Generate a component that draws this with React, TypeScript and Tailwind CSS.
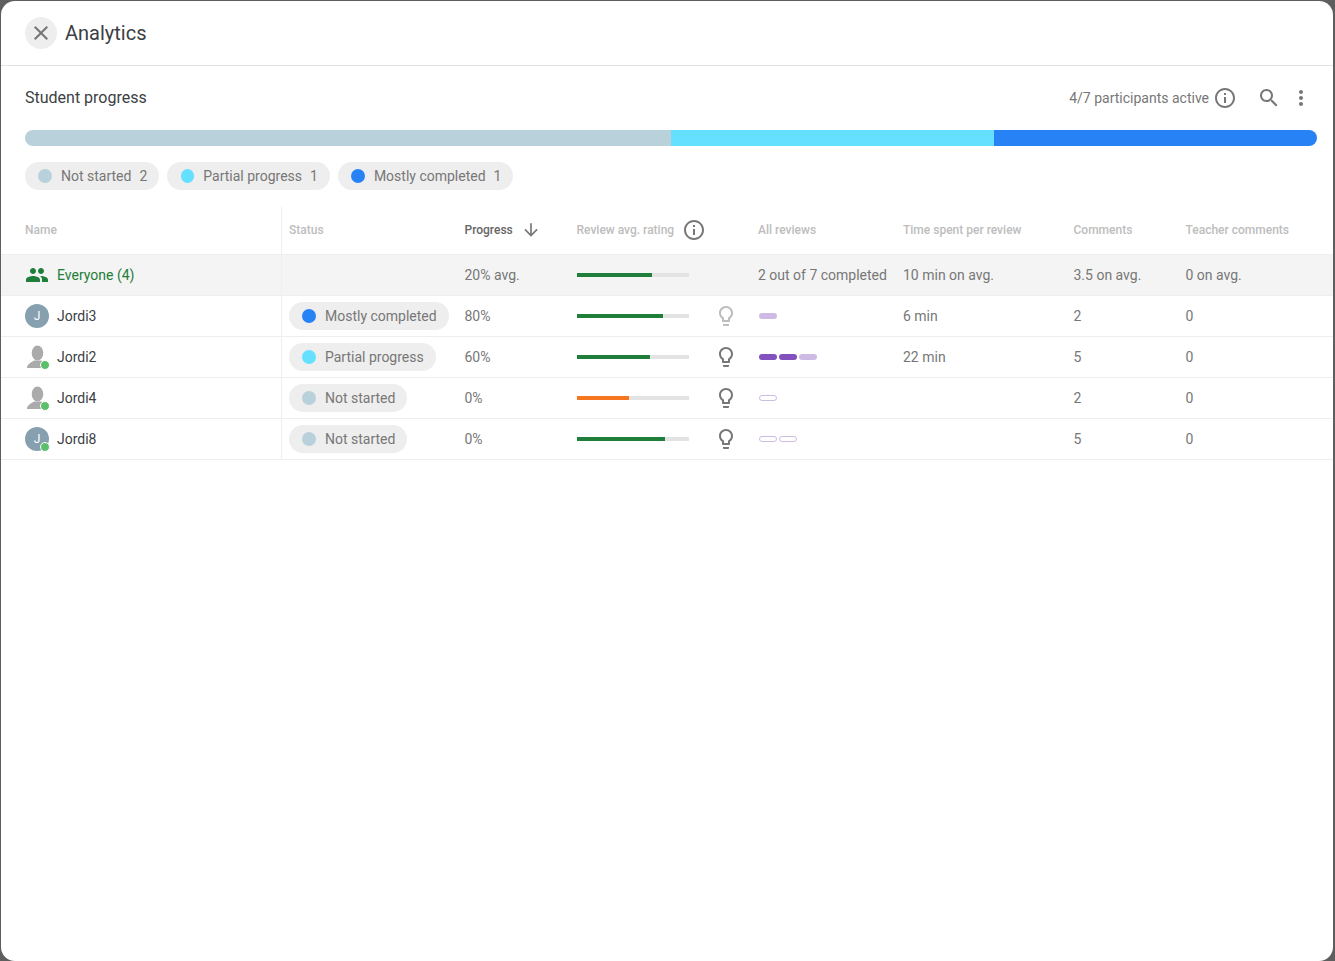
import React from 'react';

const STATUS: Record<string, string> = {
  'Not started': 'bg-[#b8d1da]',
  'Partial progress': 'bg-[#65e0ff]',
  'Mostly completed': 'bg-[#2783f5]',
};

interface Student {
  name: string; avatar: 'letter' | 'photo'; online: boolean; status: string; progress: string;
  rating: number; ratingColor: string; bulbDim: boolean; reviews: string[]; time: string; comments: string;
}

const STUDENTS: Student[] = [
  { name: 'Jordi3', avatar: 'letter', online: false, status: 'Mostly completed', progress: '80%', rating: 77, ratingColor: 'bg-[#1e7e3a]', bulbDim: true, reviews: ['light'], time: '6 min', comments: '2' },
  { name: 'Jordi2', avatar: 'photo', online: true, status: 'Partial progress', progress: '60%', rating: 65, ratingColor: 'bg-[#1e7e3a]', bulbDim: false, reviews: ['dark', 'dark', 'light'], time: '22 min', comments: '5' },
  { name: 'Jordi4', avatar: 'photo', online: true, status: 'Not started', progress: '0%', rating: 46, ratingColor: 'bg-[#f5761f]', bulbDim: false, reviews: ['empty'], time: '', comments: '2' },
  { name: 'Jordi8', avatar: 'letter', online: true, status: 'Not started', progress: '0%', rating: 79, ratingColor: 'bg-[#1e7e3a]', bulbDim: false, reviews: ['empty', 'empty'], time: '', comments: '5' },
];

// material icons, drawn inline so the strokes match
const Icon = ({ d, className }: { d: string; className: string }) => (
  <svg viewBox="0 0 24 24" fill="currentColor" className={className}><path d={d} /></svg>
);
const CLOSE = 'M19 6.41L17.59 5 12 10.59 6.41 5 5 6.41 10.59 12 5 17.59 6.41 19 12 13.41 17.59 19 19 17.59 13.41 12z';
const SEARCH = 'M15.5 14h-.79l-.28-.27C15.41 12.59 16 11.11 16 9.5 16 5.91 13.09 3 9.5 3S3 5.91 3 9.5 5.91 16 9.5 16c1.61 0 3.09-.59 4.23-1.57l.27.28v.79l5 4.99L20.49 19l-4.99-5zm-6 0C7.01 14 5 11.99 5 9.5S7.01 5 9.5 5 14 7.01 14 9.5 11.99 14 9.5 14z';
const MORE = 'M12 8c1.1 0 2-.9 2-2s-.9-2-2-2-2 .9-2 2 .9 2 2 2zm0 2c-1.1 0-2 .9-2 2s.9 2 2 2 2-.9 2-2-.9-2-2-2zm0 6c-1.1 0-2 .9-2 2s.9 2 2 2 2-.9 2-2-.9-2-2-2z';
const INFO = 'M11 7h2v2h-2zm0 4h2v6h-2zm1-9C6.48 2 2 6.48 2 12s4.48 10 10 10 10-4.48 10-10S17.52 2 12 2zm0 18c-4.41 0-8-3.59-8-8s3.59-8 8-8 8 3.59 8 8-3.59 8-8 8z';
const BULB = 'M9 21c0 .55.45 1 1 1h4c.55 0 1-.45 1-1v-1H9v1zm3-19C8.14 2 5 5.14 5 9c0 2.38 1.19 4.47 3 5.74V17c0 .55.45 1 1 1h6c.55 0 1-.45 1-1v-2.26c1.81-1.27 3-3.36 3-5.74 0-3.86-3.14-7-7-7zm2.85 11.1l-.85.6V16h-4v-2.3l-.85-.6C7.8 12.16 7 10.63 7 9c0-2.76 2.24-5 5-5s5 2.24 5 5c0 1.63-.8 3.16-2.15 4.1z';
const ARROW = 'M20 12l-1.41-1.41L13 16.17V4h-2v12.17l-5.58-5.59L4 12l8 8 8-8z';
const PEOPLE = 'M16 11c1.66 0 2.99-1.34 2.99-3S17.66 5 16 5s-3 1.34-3 3 1.34 3 3 3zm-8 0c1.66 0 2.99-1.34 2.99-3S9.66 5 8 5 5 6.34 5 8s1.34 3 3 3zm0 2c-2.33 0-7 1.17-7 3.5V19h14v-2.5c0-2.33-4.67-3.500-7-3.500zm8 0c-.29 0-.62.02-.97.05 1.16.84 1.970 1.97 1.970 3.45V19h6v-2.5c0-2.33-4.67-3.5-7-3.5z';

const Chip = ({ label, count }: { label: string; count?: number }) => (
  <div className="h-7 flex items-center rounded-full bg-[#eeeeee] pl-[13.33px] pr-3 text-[14px] text-[#777777]">
    <span className={`w-[13.33px] h-[13.33px] rounded-full ${STATUS[label]}`} />
    <span className="ml-[9.33px]">{label}</span>
    {count !== undefined && <span className="ml-2">{count}</span>}
  </div>
);

const RatingBar = ({ value, color }: { value: number; color: string }) => (
  <div className="w-[112px] h-1 bg-[#e3e3e3]">
    <div className={`h-1 ${color}`} style={{ width: `${value}%` }} />
  </div>
);

const Pill = ({ kind }: { kind: string }) => {
  if (kind === 'dark') return <span className="w-[18px] h-[6px] rounded-full bg-[#8351bd]" />;
  if (kind === 'light') return <span className="w-[18px] h-[6px] rounded-full bg-[#cdbbe6]" />;
  return <span className="w-[18px] h-[6px] rounded-full border border-[#cdbbe6] bg-white" />;
};

const PhotoAvatar = () => (
  <svg viewBox="0 0 24 24" className="w-6 h-6 absolute left-0 top-0">
    <ellipse cx="12.500" cy="8" rx="5.800" ry="7.500" fill="#ababab" />
    <path d="M2 23c0-3.500 3-5 7-7.500h7c3 1.500 4.500 4 4.500 7.500z" fill="#ababab" />
  </svg>
);

const Avatar = ({ s }: { s: Student }) => (
  <div className="relative w-6 h-6 shrink-0">
    {s.avatar === 'letter' ? (
      <div className="w-6 h-6 rounded-full bg-[#87a0b0] flex items-center justify-center text-[12px] text-white">J</div>
    ) : (
      <PhotoAvatar />
    )}
    {s.online && <span className="absolute left-[15px] top-[15px] w-2 h-2 box-content rounded-full bg-[#5cbf6c] border border-white" />}
  </div>
);

const Head = ({ left, children, strong }: { left: string; children: React.ReactNode; strong?: boolean }) => (
  <div className={`absolute top-0 h-[46px] flex items-center text-[12px] font-medium ${left} ${strong ? 'text-[#666666]' : 'text-[#bdbdbd]'}`}>
    {children}
  </div>
);

const Cell = ({ left, children }: { left: string; children: React.ReactNode }) => (
  <div className={`absolute top-0 h-10 flex items-center whitespace-nowrap ${left}`}>{children}</div>
);

export default function App() {
  return (
    <div className="w-[1335px] h-[961px] bg-[#5e5e5e] overflow-hidden [font-family:Roboto,sans-serif]">
      <div className="relative ml-px mt-px w-[1332px] h-[960px] bg-white rounded-[14px] text-[14px] text-[#777777]">
        <header className="h-[65px] border-b border-[#e3e3e3] flex items-center pl-6">
          <button className="w-8 h-8 rounded-full bg-[#eeeeee] flex items-center justify-center text-[#757575]">
            <Icon d={CLOSE} className="w-6 h-6" />
          </button>
          <h1 className="ml-2 text-[20px] text-[#3c4043]">Analytics</h1>
        </header>

        <div className="absolute left-6 top-[87px] text-[16px] leading-5 text-[#3c4043]">Student progress</div>
        <div className="absolute right-5 top-[85px] h-6 flex items-center text-[#777777]">
          <span>4/7 participants active</span>
          <Icon d={INFO} className="ml-1 w-6 h-6" />
          <Icon d={SEARCH} className="ml-5 w-6 h-6" />
          <Icon d={MORE} className="ml-2 w-6 h-6" />
        </div>

        <div className="absolute left-6 top-[129px] w-[1292px] h-4 rounded-full overflow-hidden flex">
          <div className="w-[646px] bg-[#b8d1da]" />
          <div className="w-[323px] bg-[#65e0ff]" />
          <div className="w-[323px] bg-[#2783f5]" />
        </div>

        <div className="absolute left-6 top-[161px] flex gap-2">
          <Chip label="Not started" count={2} />
          <Chip label="Partial progress" count={1} />
          <Chip label="Mostly completed" count={1} />
        </div>

        <div className="absolute left-0 top-[206px] w-full">
          <div className="relative h-[48px] border-b border-[#eeeeee]">
            <Head left="left-6">Name</Head>
            <Head left="left-[288px]">Status</Head>
            <Head left="left-[463.500px]" strong>
              Progress
              <Icon d={ARROW} className="ml-2 w-5 h-5 text-[#777777]" />
            </Head>
            <Head left="left-[575.500px]">
              Review avg. rating
              <Icon d={INFO} className="ml-2 w-6 h-6 text-[#777777]" />
            </Head>
            <Head left="left-[757px]">All reviews</Head>
            <Head left="left-[902px]">Time spent per review</Head>
            <Head left="left-[1072.500px]">Comments</Head>
            <Head left="left-[1184.500px]">Teacher comments</Head>
          </div>

          <div className="relative h-[41px] bg-[#f4f4f4] border-b border-[#eeeeee]">
            <Cell left="left-6">
              <Icon d={PEOPLE} className="w-6 h-6 text-[#1e7e3a]" />
              <span className="ml-2 text-[#1e7e3a]">Everyone (4)</span>
            </Cell>
            <Cell left="left-[463.500px]">20% avg.</Cell>
            <Cell left="left-[576px]"><RatingBar value={67} color="bg-[#1e7e3a]" /></Cell>
            <Cell left="left-[757px]">2 out of 7 completed</Cell>
            <Cell left="left-[902px]">10 min on avg.</Cell>
            <Cell left="left-[1072.500px]">3.5 on avg.</Cell>
            <Cell left="left-[1184.500px]">0 on avg.</Cell>
          </div>

          {STUDENTS.map(s => (
            <div key={s.name} className="relative h-[41px] border-b border-[#eeeeee]">
              <Cell left="left-6">
                <Avatar s={s} />
                <span className="ml-2 text-[#3c4043]">{s.name}</span>
              </Cell>
              <Cell left="left-[288px]"><Chip label={s.status} /></Cell>
              <Cell left="left-[463.500px]">{s.progress}</Cell>
              <Cell left="left-[576px]"><RatingBar value={s.rating} color={s.ratingColor} /></Cell>
              <Cell left="left-[713px]">
                <Icon d={BULB} className={`w-6 h-6 ${s.bulbDim ? 'text-[#bdbdbd]' : 'text-[#777777]'}`} />
              </Cell>
              <Cell left="left-[758px]">
                <div className="flex gap-[2px]">
                  {s.reviews.map((r, i) => <Pill key={i} kind={r} />)}
                </div>
              </Cell>
              <Cell left="left-[902px]">{s.time}</Cell>
              <Cell left="left-[1072.500px]">{s.comments}</Cell>
              <Cell left="left-[1184.500px]">0</Cell>
            </div>
          ))}

          <div className="absolute left-[280px] top-0 w-px h-[253px] bg-[#eeeeee]" />
        </div>
      </div>
    </div>
  );
}
